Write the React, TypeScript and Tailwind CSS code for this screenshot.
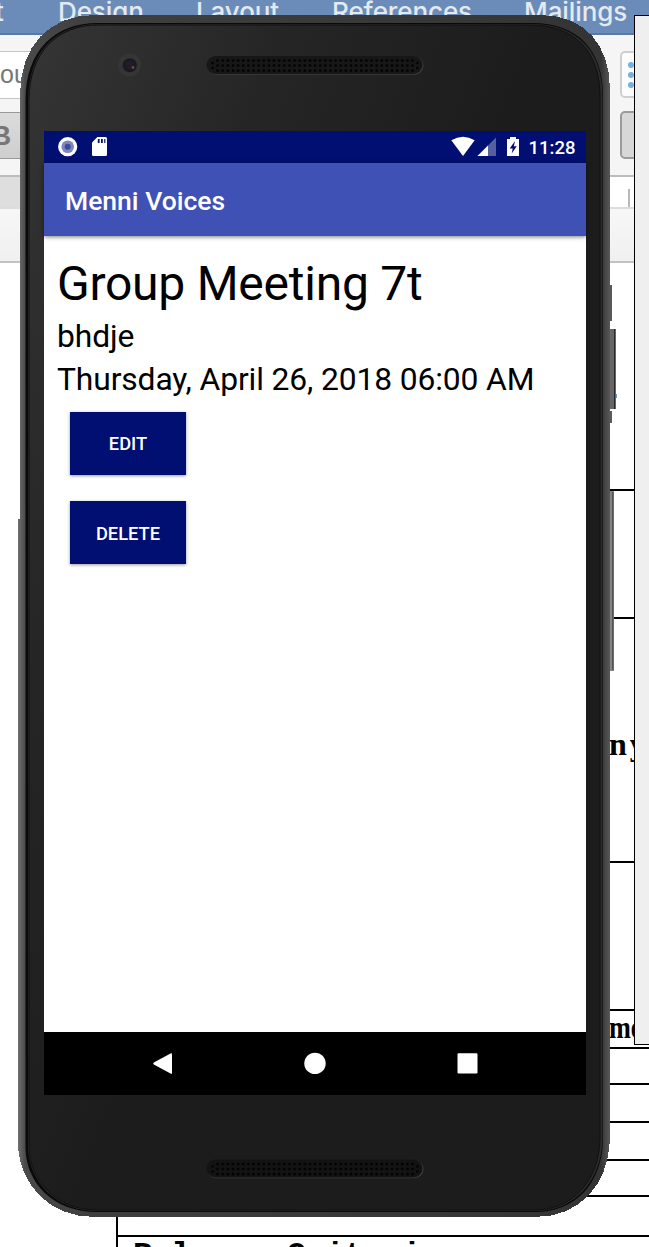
import React from "react";

const SPEAKER_COLUMNS = Array.from({ length: 39 }, (_, i) => 217.6 + i * 5.13);

function Speaker({ y, fill }: { y: number; fill: string }) {
  return (
    <g>
      <rect x="207" y={y} width="216.5" height="18.2" rx="9" fill="#3c3c3c" />
      <rect x="206.5" y={y - 0.5} width="216" height="18" rx="9" fill={fill} />
      {SPEAKER_COLUMNS.map((cx) => (
        <g key={cx} fill="#030303">
          <circle cx={cx} cy={y + 4} r="1.35" />
          <circle cx={cx} cy={y + 9} r="1.35" />
          <circle cx={cx} cy={y + 14.2} r="1.35" />
        </g>
      ))}
      <g fill="#030303">
        <circle cx="212.6" cy={y + 6.5} r="1.3" />
        <circle cx="212.6" cy={y + 11.5} r="1.3" />
        <circle cx="417.4" cy={y + 6.5} r="1.3" />
        <circle cx="417.4" cy={y + 11.5} r="1.3" />
      </g>
    </g>
  );
}

function PhoneBody() {
  return (
    <svg className="absolute left-0 top-0" width="649" height="1247" viewBox="0 0 649 1247">
      <defs>
        <linearGradient id="face" x1="0" y1="0" x2="0.55" y2="0.45">
          <stop offset="0" stopColor="#353535" />
          <stop offset="0.5" stopColor="#252525" />
          <stop offset="1" stopColor="#1c1c1c" />
        </linearGradient>
        <linearGradient id="rim" x1="0" y1="0" x2="1" y2="0">
          <stop offset="0" stopColor="#707070" />
          <stop offset="0.012" stopColor="#4a4a4a" />
          <stop offset="0.12" stopColor="#3f3f3f" />
          <stop offset="0.985" stopColor="#353434" />
          <stop offset="1" stopColor="#595758" />
        </linearGradient>
      </defs>
      <rect x="609" y="285" width="3" height="36" fill="#5b5959" />
      <rect x="609" y="329" width="7" height="80" fill="#686566" />
      <rect x="614" y="329" width="1" height="80" fill="#292929" />
      <rect x="609" y="411" width="3" height="12" fill="#5b5959" />
      <rect x="609" y="491" width="5" height="180" fill="#858283" />
      <rect x="612" y="492" width="1.5" height="178" fill="#555354" />
      <rect x="616" y="394" width="1" height="4" fill="#5b9bd5" />
      <path
        shapeRendering="crispEdges"
        d="M20 95C20 45 50 15 95 15H540C585 15 610 45 610 90V1140C608 1185 580 1217 535 1217H95C48 1217 21 1184 18 1148V519H20Z"
        fill="url(#rim)"
      />
      <path
        d="M25.5 100C25.5 50 55 23 98 23H532C578 23 603 50 603 96V1140C602 1183 576 1212 535 1212H97C53 1212 26 1183 25.5 1148Z"
        fill="#0a0a0a"
      />
      <path
        d="M28 100C28 52 56 24 98 24H532C577 24 602.5 51 602.5 96V1140C601 1181 575 1211 535 1211H97C55 1211 29 1181 28 1148Z"
        fill="#2b2b2b"
      />
      <path
        d="M29 100C29 53 57 25 98 25H530C575 25 600 52 600 96V1140C599 1180 573 1210 535 1210H97C56 1210 30 1180 29 1148Z"
        fill="url(#face)"
        stroke="#101010"
        strokeWidth="1"
      />
      <circle cx="129.5" cy="65" r="11.5" fill="#353535" />
      <circle cx="129.8" cy="65.3" r="7" fill="#1b191d" />
      <circle cx="130" cy="65" r="4.5" fill="#211b2b" />
      <circle cx="133" cy="67.5" r="1.4" fill="#764148" />
      <Speaker y={56.5} fill="#171717" />
      <Speaker y={1160} fill="#131313" />
    </svg>
  );
}

function StatusBar() {
  return (
    <div className="flex h-8 shrink-0 items-center bg-[#000f71] text-white">
      <svg width="542" height="32" viewBox="0 0 542 32">
        <circle cx="23.7" cy="15.7" r="9.6" fill="#fff" />
        <circle cx="23.7" cy="15.7" r="6.3" fill="#7d86bd" />
        <circle cx="23.7" cy="15.7" r="3" fill="#3e4a9c" />
        <path d="M53.4 6H61.6Q63 6 63 7.5V23.5Q63 25 61.5 25H49.4Q48 25 48 23.5V11.5Z" fill="#fff" />
        <path d="M53.8 8h1.8v4h-1.8zM57 8h1.8v4h-1.8zM60.2 8h1.2v4h-1.2z" fill="#000f71" />
        <path d="M407.3 9.3Q419 2 430.7 9.3L419 25Z" fill="#fff" />
        <path d="M452 6.5V25H433.5Z" fill="#5660a1" />
        <path d="M444 14.5V25H433.5Z" fill="#fff" />
        <path d="M463 8H466V6H472V8H475V25H463Z" fill="#fff" />
        <path d="M471 10L465.7 17.5H468.7L467.7 22.5L472.7 15.2H469.8Z" fill="#000f71" />
        <text x="484.5" y="23.2" fill="#fff" fontFamily="Roboto, sans-serif" fontWeight="500" fontSize="18.3" textLength="47" lengthAdjust="spacingAndGlyphs">11:28</text>
      </svg>
    </div>
  );
}

function ActionButton({ children, className }: { children: React.ReactNode; className: string }) {
  return (
    <button className={`flex h-[63px] w-[116px] items-center justify-center bg-[#000f71] text-[18.3px] font-medium text-white shadow-[0_1px_3px_rgba(0,0,0,0.4)] ${className}`}>
      {children}
    </button>
  );
}

function PhoneScreen() {
  return (
    <div className="absolute left-[44px] top-[131px] flex h-[964px] w-[542px] flex-col bg-white font-['Roboto',sans-serif] text-black">
      <StatusBar />
      <header className="flex h-[73px] shrink-0 items-center bg-[#3f51b5] pl-[21px] pt-[2px] text-[26.5px] font-medium text-white shadow-[0_1px_4px_rgba(0,0,0,0.5)]">
        Menni Voices
      </header>
      <main className="flex grow flex-col pl-[13px] pt-[20px]">
        <h1 className="whitespace-nowrap text-[48px] leading-[56px] tracking-[-0.25px]">Group Meeting 7t</h1>
        <p className="mt-[3px] text-[31.8px] leading-[43px] tracking-[-0.12px]">bhdje</p>
        <p className="whitespace-nowrap text-[31.8px] leading-[43px] tracking-[-0.12px]">Thursday, April 26, 2018 06:00 AM</p>
        <div className="mt-[11px] flex flex-col gap-[26px] pl-[13px]">
          <ActionButton className="pt-px">EDIT</ActionButton>
          <ActionButton className="pt-[2px]">DELETE</ActionButton>
        </div>
      </main>
      <nav className="flex h-[63px] shrink-0 items-center bg-black">
        <svg width="542" height="63" viewBox="0 0 542 63" fill="#fff">
          <path d="M126.5 21.5Q128 20.5 128 22.3V40.7Q128 42.5 126.5 41.6L109.8 32.6Q108.6 31.5 109.8 30.6Z" />
          <circle cx="271" cy="31.4" r="10.7" />
          <rect x="413.5" y="21.2" width="20" height="20.2" rx="1.2" />
        </svg>
      </nav>
    </div>
  );
}

const TABLE_ROWS = ["h-[128px]", "h-[244px]", "h-[148px]", "h-[38px]", "h-[36px]", "h-[38px]", "h-[38px]", "h-[36px]", "h-[40px]"];
const ROW_TEXT: Record<number, string> = { 1: "ny", 3: "me" };
const ROW_PAD: Record<number, string> = {
  1: "pt-[106px] tracking-[3px]",
  3: "-mt-[3px] origin-left scale-x-[0.82]",
};

function Document() {
  return (
    <div className="flex h-[1247px] w-[649px] flex-col overflow-hidden bg-white">
      <div className="flex h-[35px] shrink-0 whitespace-nowrap border-b-2 border-[#5779a6] bg-[#6b8cb8] pl-px font-['Inter',sans-serif] text-[26px] font-medium leading-[24px] tracking-[-0.1px] text-[#e3eaf0]">
        <span className="w-[57px] shrink-0 -indent-[6px]">t</span>
        <span className="w-[138px] shrink-0">Design</span>
        <span className="w-[136px] shrink-0">Layout</span>
        <span className="w-[192px] shrink-0">References</span>
        <span>Mailings</span>
      </div>
      <div className="flex h-[142px] shrink-0 justify-between border-b-2 border-[#bdbdbd] bg-[#f5f5f5] pt-4 font-['Liberation_Sans',sans-serif]">
        <div className="flex w-[60px] flex-col gap-[13px]">
          <div className="flex h-[48px] items-center border-y border-[#c4c4c4] bg-white text-[25px] text-[#777]">ou</div>
          <div className="flex h-[47px] items-center border-y border-[#999] bg-gradient-to-b from-[#dcdcdc] to-[#cecece] text-[28px] font-bold text-[#777]">
            <span className="-ml-[9px]">B</span>
          </div>
        </div>
        <div className="flex w-[46px] gap-[17px]">
          <div className="-mt-2 h-[115px] w-px bg-[#e1e1e1]" />
          <div className="flex w-[40px] shrink-0 flex-col gap-[13px]">
            <div className="flex h-[47px] flex-col items-start justify-center gap-1 rounded-[5px] border-2 border-[#cfcfcf] bg-[#fcfcfc] pl-[6px]">
              <i className="size-[6px] rounded-full bg-[#72b1e6]" />
              <i className="size-[6px] rounded-full bg-[#72b1e6]" />
              <i className="size-[6px] rounded-full bg-[#72b1e6]" />
            </div>
            <div className="h-[48px] rounded-[5px] border-2 border-[#9a9a9a] bg-[#d7d7d7]" />
          </div>
        </div>
      </div>
      <div className="flex h-[32px] shrink-0 items-end border-b-2 border-[#dcdcdc] bg-gradient-to-r from-[#dedede] from-50% to-white to-50%">
        <div className="ml-[628px] h-[18px] w-[2px] bg-[#b9b9b9]" />
      </div>
      <div className="h-[54px] shrink-0 border-b-2 border-[#c2c2c2] bg-gradient-to-b from-[#f7f7f7] to-[#f0f0f0]" />
      <div className="ml-[116px] mt-[226px] flex shrink-0 flex-col border-l-2 border-t-2 border-black text-[32px] font-bold leading-[38px] text-black">
        {TABLE_ROWS.map((height, i) => (
          <div key={i} className={`${height} shrink-0 border-b-2 border-black pl-[491px] font-['Liberation_Serif',serif]`}>
            {ROW_TEXT[i] ? <div className={ROW_PAD[i]}>{ROW_TEXT[i]}</div> : null}
          </div>
        ))}
        <div className="whitespace-nowrap pl-[15px] font-['Liberation_Mono',monospace]">Release Criteria</div>
      </div>
    </div>
  );
}

export default function App() {
  return (
    <div className="relative h-[1247px] w-[649px] overflow-hidden">
      <Document />
      <div className="absolute left-[634px] top-[15px] h-[1030px] w-[30px] border border-black bg-[#efefef]" />
      <PhoneBody />
      <PhoneScreen />
    </div>
  );
}
